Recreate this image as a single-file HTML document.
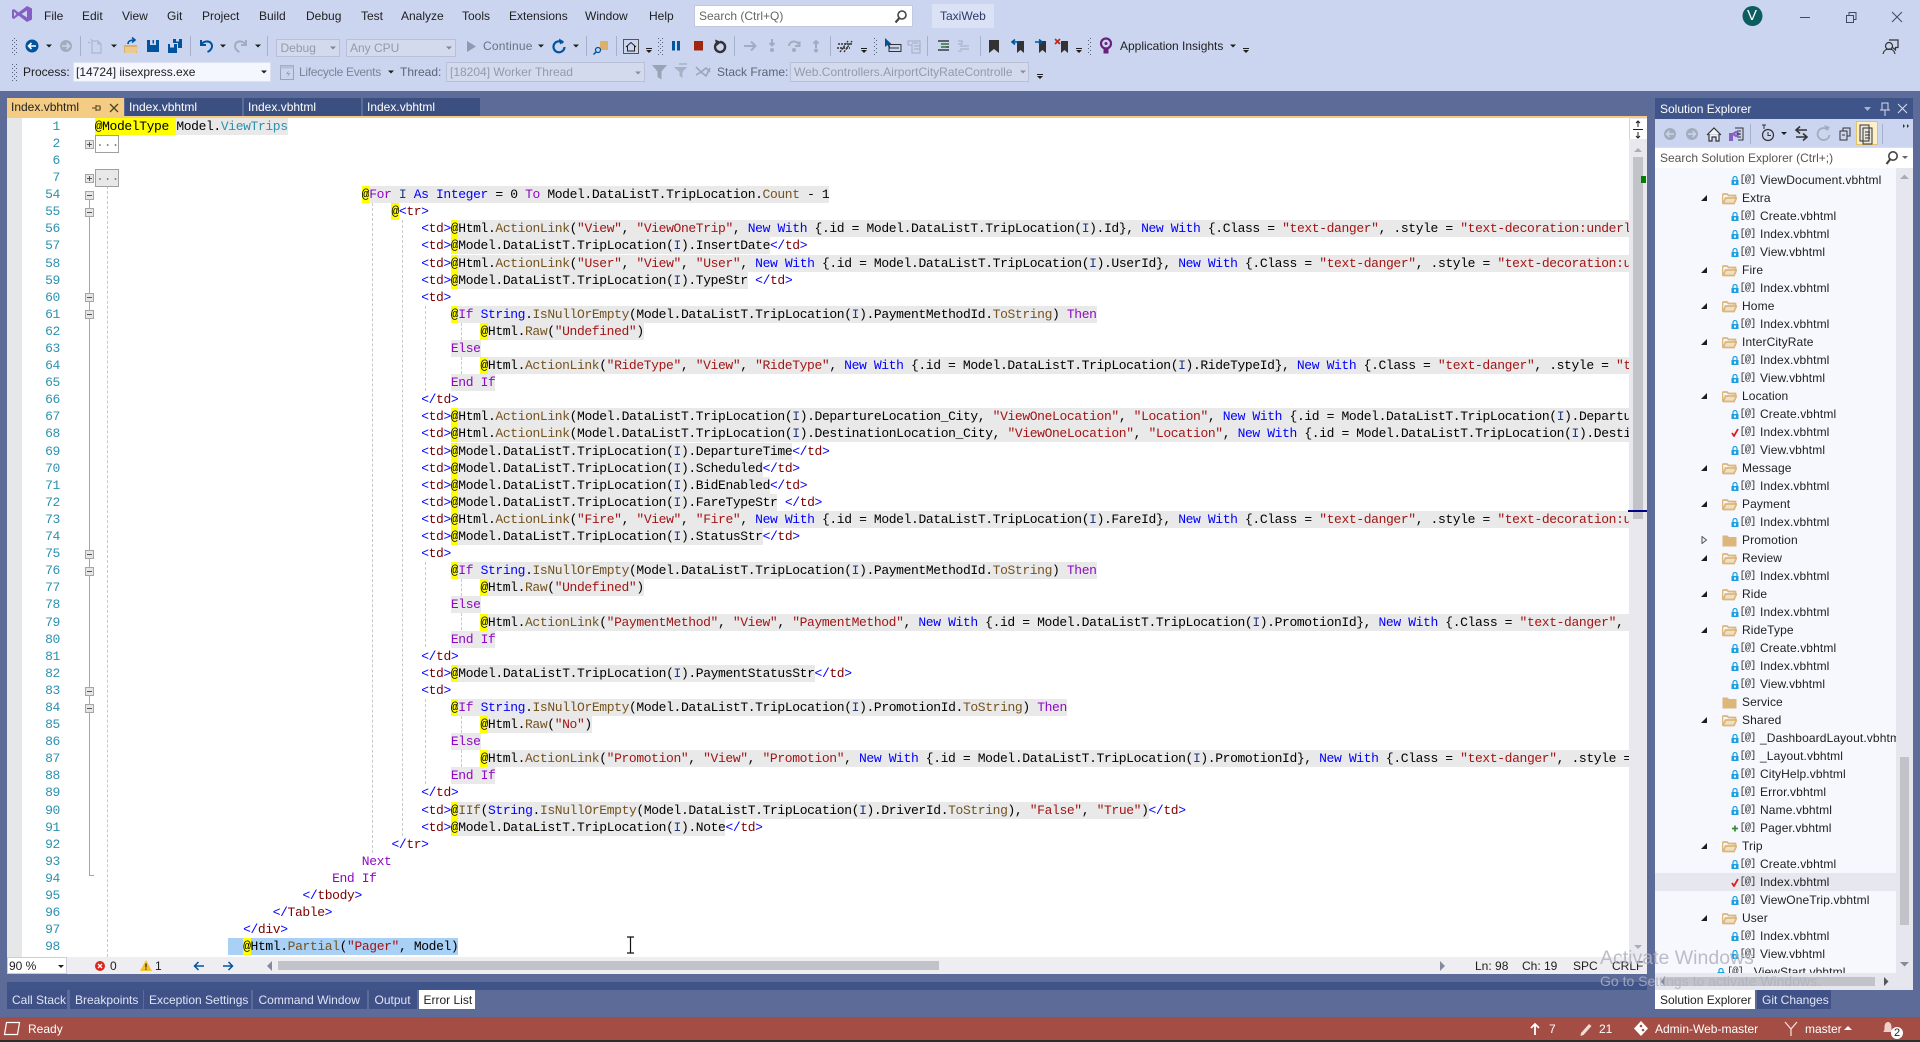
<!DOCTYPE html>
<html><head><meta charset="utf-8"><title>TaxiWeb</title>
<style>
html,body{margin:0;padding:0;width:1920px;height:1042px;overflow:hidden;background:#5D6B99;font-family:"Liberation Sans",sans-serif;font-size:12px;color:#1e1e1e}
.a{position:absolute}
.t{position:absolute;white-space:pre;line-height:16px;height:16px}
#code{position:absolute;left:7px;top:0;width:1622px;height:957px;overflow:hidden}
#lines{position:absolute;left:87.7px;top:117.8px;width:4000px;font:13px/17px "Liberation Mono",monospace;letter-spacing:-.38px;color:#000}
.l{height:17.1px;line-height:17px;white-space:pre}
.l i{font-style:normal}
.u{color:#00f}.t2{color:#800000}.s{color:#a31515}.m{color:#74531f}.k{color:#8f08c4}.v{color:#1f377f}.c{color:#2b91af}
.l b{font-weight:normal;background:#ff0;display:inline-block;height:17px}
.g{background:#e9e9e9;display:inline-block;height:17px}
.i20{margin-left:148.4px}.i24{margin-left:178px}.i28{margin-left:207.8px}.i32{margin-left:237.4px}.i36{margin-left:267.1px}.i40{margin-left:296.8px}.i44{margin-left:326.5px}.i48{margin-left:356.2px}.i52{margin-left:385.8px}
#nums{position:absolute;left:22px;top:117.8px;width:38px;text-align:right;font:13px/17px "Liberation Mono",monospace;letter-spacing:-.36px;color:#2b91af}
#nums div{height:17.1px}
.d{position:absolute;width:0;border-left:1px dashed #c8c8c8}
.fb{position:absolute;left:85px;width:7px;height:7px;border:1px solid #a5a5a5;background:#e6e6e6}
.fb:before{content:"";position:absolute;left:1px;top:3px;width:5px;height:1px;background:#555}
.fb.p:after{content:"";position:absolute;left:3px;top:1px;width:1px;height:5px;background:#555}
.col{position:absolute;left:95px;width:22px;height:16px;border:1px solid #a0a0a0;font:13px/14px "Liberation Mono",monospace;color:#808080;text-align:center;letter-spacing:0}
.tab{position:absolute;top:98px;height:18px;background:#3b4f81;color:#fff;line-height:18px;white-space:pre}
.bt{position:absolute;top:990px;height:19px;background:#3f5187;color:#dfe4f4;line-height:20px;white-space:pre}
.bt.on{background:#f7f8fc;color:#1e1e1e}
.cmb{position:absolute;background:#d3daed;border:1px solid #b8c0d6;box-sizing:border-box;color:#939aad;white-space:pre}
#tree{position:absolute;left:1655px;top:168px;width:241px;height:805px;overflow:hidden;background:#f6f8fe;letter-spacing:.12px;color:#1e1e1e}
.r{position:relative;height:18px;line-height:18px;white-space:pre}
.f{padding-left:105px}
.o{padding-left:87px}
.r svg{position:absolute}
.f svg{left:76px;top:5px;width:8px;height:9px}
.f u{position:absolute;left:84.5px;top:0;text-decoration:none;font:10.5px/18px "Liberation Mono",monospace;letter-spacing:-1px;color:#333}
.o svg.ar{left:45px;top:5px;width:8px;height:8px}
.o svg.fo{left:67px;top:3px;width:15px;height:13px}
</style></head>
<body>
<!-- title / toolbar band -->
<div class="a" style="left:0;top:0;width:1920px;height:91px;background:#ccd5f0"></div>
<div class="a" style="left:932px;top:4px;width:62px;height:24px;background:#dce2f6"></div>
<div class="a" style="left:694px;top:5px;width:219px;height:22px;background:#fff;border:1px solid #c2c9dd;box-sizing:border-box"></div>
<div class="cmb" style="left:275.5px;top:39px;width:64.5px;height:18px;line-height:16px;padding-left:4px">Debug</div>
<div class="cmb" style="left:346px;top:39px;width:110px;height:18px;line-height:16px;padding-left:3px">Any CPU</div>
<div class="a" style="left:72.6px;top:62px;width:198.4px;height:20px;background:#f4f7fe;border:1px solid #dbe1f2;box-sizing:border-box"></div>
<div class="cmb" style="left:446px;top:62px;width:199px;height:20px;line-height:18px;padding-left:3px">[18204] Worker Thread</div>
<div class="cmb" style="left:790px;top:62px;width:239px;height:20px;line-height:18px;padding-left:3px;overflow:hidden">Web.Controllers.AirportCityRateControlle</div>

<svg class="a" style="left:0;top:0" width="1920" height="91" viewBox="0 0 1920 91">
<defs>
<pattern id="gp" width="4" height="4" patternUnits="userSpaceOnUse"><rect width="1" height="1" fill="#59627d"/><rect x="2" y="2" width="1" height="1" fill="#59627d"/></pattern>
<path id="dd" d="M-3-1.5h6l-3 3z" fill="#1e1e1e"/>
<g id="ov"><rect x="-3" y="-3" width="6" height="1" fill="#1e1e1e"/><path d="M-3-1h6l-3 3z" fill="#1e1e1e"/></g>
</defs>
<!-- VS logo -->
<path fill="#865fc5" fill-rule="evenodd" d="M27 6L32 8.5V19.5L27 22L18.5 15.5L14 19L12 18V10L14 9L18.5 12.5ZM27 10.5L21.5 14L27 17.5ZM14 11.5V16.5L16.5 14Z"/>
<!-- grips -->
<rect x="12" y="37" width="5" height="18" fill="url(#gp)"/><rect x="12" y="63" width="5" height="18" fill="url(#gp)"/>
<rect x="658" y="37" width="5" height="18" fill="url(#gp)"/><rect x="873" y="37" width="5" height="18" fill="url(#gp)"/><rect x="1087" y="37" width="5" height="18" fill="url(#gp)"/>
<!-- separators -->
<g fill="#a6b0cb"><rect x="80" y="36" width="1" height="20"/><rect x="190" y="36" width="1" height="20"/><rect x="267" y="36" width="1" height="20"/><rect x="586" y="36" width="1" height="20"/><rect x="616" y="36" width="1" height="20"/><rect x="734" y="36" width="1" height="20"/><rect x="830" y="36" width="1" height="20"/><rect x="927" y="36" width="1" height="20"/><rect x="980" y="36" width="1" height="20"/></g>
<!-- nav -->
<circle cx="32" cy="46" r="6.5" fill="#00539c"/><path d="M36 46H29M31.5 43L28.5 46L31.5 49" stroke="#fff" stroke-width="1.6" fill="none"/>
<use href="#dd" x="49" y="46"/>
<circle cx="66" cy="46" r="6" fill="#a3acbe"/><path d="M62 46H69M66.5 43L69.5 46L66.5 49" stroke="#ccd5f0" stroke-width="1.5" fill="none"/>
<path d="M92 41h6l3 3v9H92zM98 41v3h3" fill="none" stroke="#a8b0c4"/><path d="M91 39l1 2M88 42l2 1" stroke="#a8b0c4"/>
<use href="#dd" x="114" y="46"/>
<path d="M124 45h13v8h-13z" fill="#dcaf6b"/><path d="M125 47h13l-2 6h-11z" fill="#ebc98f"/><path d="M128 44c0-3 3-4 6-4M132 37.5l3 2.5-3 2.5" stroke="#00539c" stroke-width="1.6" fill="none"/>
<path d="M147 40h12v12h-12z" fill="#00539c"/><rect x="150" y="40" width="6" height="5" fill="#ccd5f0"/><rect x="152.5" y="40" width="1.5" height="3.5" fill="#00539c"/>
<path d="M168 44h9v9h-9z" fill="#00539c"/><rect x="170" y="44" width="4" height="3.5" fill="#ccd5f0"/><path d="M173 39h9v9h-4v-5h-5z" fill="#00539c"/><rect x="176" y="39" width="3" height="2.5" fill="#ccd5f0"/>
<path d="M201 40v5h5M201.5 45c1-4 8-5 10-1 1.5 3-.5 6.5-4 8" fill="none" stroke="#00539c" stroke-width="2"/>
<use href="#dd" x="223" y="46"/>
<path d="M246 40v5h-5M245.5 45c-1-4-8-5-10-1-1.5 3 .5 6.5 4 8" fill="none" stroke="#a3acbe" stroke-width="2"/>
<use href="#dd" x="258" y="46"/>
<use href="#dd" x="333" y="48" opacity=".45"/><use href="#dd" x="449" y="48" opacity=".45"/>
<path d="M467 41L476 46.5L467 52z" fill="#8f99b0"/>
<use href="#dd" x="541" y="46"/>
<path d="M563 43a5.5 5.5 0 1 0 1.5 4" fill="none" stroke="#00539c" stroke-width="2.2"/><path d="M559 38.5l5 3-4 3z" fill="#00539c"/>
<use href="#dd" x="576" y="46"/>
<path d="M600 41h8v9h-8z" fill="#dcaf6b"/><circle cx="598" cy="50" r="2.5" fill="#ccd5f0" stroke="#00539c" stroke-width="1.3"/><path d="M596 52l-2.5 2.5" stroke="#00539c" stroke-width="1.5"/>
<rect x="623.5" y="39.5" width="15" height="14" fill="#ccd5f0" stroke="#555" /><path d="M626 47l5-4.5 5 4.5M627.5 46v5h7v-5" fill="none" stroke="#1e1e1e"/>
<use href="#ov" x="649" y="51"/>
<rect x="672" y="41" width="3" height="9.5" fill="#00539c"/><rect x="677" y="41" width="3" height="9.5" fill="#00539c"/>
<rect x="694" y="41" width="9" height="9.5" fill="#a1260d"/>
<path d="M716.5 43.5a5 5 0 1 0 3.5-1.5" fill="none" stroke="#333" stroke-width="2.4"/><path d="M715 39.5l6.5 2.5-5 4z" fill="#333"/>
<path d="M744 46h11M751 41.5l4.5 4.5-4.5 4.5" stroke="#a3acbe" stroke-width="2" fill="none"/>
<path d="M772 39v6M769.5 43l2.5 2.5 2.5-2.5" stroke="#a3acbe" stroke-width="2" fill="none"/><circle cx="772" cy="50" r="2" fill="#a3acbe"/>
<path d="M789 46c0-6 10-6 10 0M799.5 41.5v4.5h-4.5" stroke="#a3acbe" stroke-width="2" fill="none"/><circle cx="794" cy="50" r="2" fill="#a3acbe"/>
<path d="M816 48v-7M813.5 43.5l2.5-2.5 2.5 2.5" stroke="#a3acbe" stroke-width="2" fill="none"/><circle cx="816" cy="50.5" r="2" fill="#a3acbe"/>
<path d="M840 52l8-11M844 52l8-11M838 44h14M837 48h13" stroke="#333" stroke-width="1.4" stroke-dasharray="2 1" fill="none"/>
<use href="#ov" x="864" y="51"/>
<path d="M885 38v9l2.5-2 2 4 1.5-.8-2-3.7h3z" fill="#00539c"/><rect x="889" y="44.5" width="12" height="7" fill="none" stroke="#333"/><rect x="891" y="47.5" width="8" height="1" fill="#333"/>
<path d="M908 41h12v12h-8v-8h-4zM912 43h6M914 46h6M914 49h6" fill="none" stroke="#a3acbe"/>
<path d="M938 41h11M941 44h8M941 47h8M938 50h11" stroke="#1e1e1e" stroke-width="1.2"/><path d="M941 44h8M941 47h5" stroke="#2e7d32" stroke-width="1.2"/>
<path d="M958 41h4v3h-4M960 46h9M960 49h9M958 51h4" stroke="#a3acbe" fill="none"/>
<path d="M989 40h10v13l-5-4-5 4z" fill="#333"/>
<path d="M1017 41h7v12l-3.5-3-3.5 3z" fill="#333"/><path d="M1019 42h-6M1015 39.5l-3 2.5 3 2.5" stroke="#00539c" stroke-width="1.6" fill="none"/>
<path d="M1039 41h7v12l-3.5-3-3.5 3z" fill="#333"/><path d="M1035 42h6M1039 39.5l3 2.5-3 2.5" stroke="#00539c" stroke-width="1.6" fill="none"/>
<path d="M1061 41h7v12l-3.5-3-3.5 3z" fill="#333"/><path d="M1055 39l5 5M1060 39l-5 5" stroke="#c5281c" stroke-width="1.8"/>
<use href="#ov" x="1079" y="51"/>
<circle cx="1106" cy="43.5" r="5" fill="none" stroke="#68217a" stroke-width="2.2"/><rect x="1103.5" y="49" width="5" height="4.5" fill="#68217a"/><circle cx="1106" cy="43.5" r="1.5" fill="#68217a"/>
<use href="#dd" x="1233" y="46"/><use href="#ov" x="1246" y="51"/>
<!-- feedback -->
<circle cx="1889" cy="46" r="3.5" fill="none" stroke="#333" stroke-width="1.2"/><path d="M1883 54c1-4 3-5 6-5s5 1 6 5M1889 40h9v7.5h-2.5v2.5l-3-2.5" fill="none" stroke="#333" stroke-width="1.2"/>
<!-- title controls -->
<circle cx="1752.5" cy="16" r="10" fill="#0b5d5f"/>
<rect x="1800" y="17" width="10" height="1" fill="#3f4a66"/>
<path d="M1846.5 15.5h7v7h-7zM1849 15.5v-3h7v7h-2.5" fill="none" stroke="#3f4a66"/>
<path d="M1892 12l10 10M1902 12l-10 10" stroke="#3f4a66"/>
<!-- search glass -->
<circle cx="902" cy="15" r="4" fill="none" stroke="#444" stroke-width="1.6"/><path d="M899 18.5l-3.5 4" stroke="#444" stroke-width="2.2"/>
<!-- row 2 -->
<use href="#dd" x="264" y="72"/>
<rect x="280.5" y="65.5" width="13" height="14" fill="none" stroke="#9aa2b6"/><rect x="280.5" y="65.5" width="13" height="3" fill="#b7bfd2"/><path d="M289 70l-3 4h2.5l-1.5 3.5 3.5-4.5H288z" fill="#9aa2b6"/>
<use href="#dd" x="391" y="72"/>
<use href="#dd" x="638" y="73" opacity=".4"/>
<path d="M652 65h15l-5.5 6.5v8l-4-2.5v-5.5z" fill="#9aa2b6"/>
<path d="M674 67h13l-4.5 5v6l-3-2v-4z" fill="#a8b0c4"/><path d="M679 64h8" stroke="#a8b0c4" stroke-width="1.5"/>
<path d="M696 67l5 5 5-4 4 4M696 75l5-3 5 4 4-8" fill="none" stroke="#9aa2b6" stroke-width="1.5"/>
<use href="#dd" x="1023" y="72" opacity=".4"/>
<use href="#ov" x="1040" y="77"/>
<!-- tab strip right -->
<path d="M1619 104h7l-3.5 4z" fill="#e9edf8"/>
<circle cx="1641" cy="106" r="3.2" fill="none" stroke="#dfe4f4" stroke-width="2.2"/><circle cx="1641" cy="106" r="5" fill="none" stroke="#dfe4f4" stroke-width="1" stroke-dasharray="2 1.9"/>
</svg>

<!-- menu text -->
<span class="t" style="left:44px;top:8px">File</span><span class="t" style="left:82px;top:8px">Edit</span><span class="t" style="left:122px;top:8px">View</span><span class="t" style="left:167px;top:8px">Git</span><span class="t" style="left:202px;top:8px">Project</span><span class="t" style="left:259px;top:8px">Build</span><span class="t" style="left:306px;top:8px">Debug</span><span class="t" style="left:361px;top:8px">Test</span><span class="t" style="left:401px;top:8px">Analyze</span><span class="t" style="left:462px;top:8px">Tools</span><span class="t" style="left:509px;top:8px">Extensions</span><span class="t" style="left:585px;top:8px">Window</span><span class="t" style="left:649px;top:8px">Help</span>
<span class="t" style="left:699px;top:8px;color:#666">Search (Ctrl+Q)</span>
<span class="t" style="left:940px;top:8px;color:#2b3a66">TaxiWeb</span>
<span class="t" style="left:1747px;top:8px;color:#fff;font-size:15px">V</span>
<span class="t" style="left:483px;top:38px;color:#6a7184;letter-spacing:.2px">Continue</span>
<span class="t" style="left:1120px;top:38px">Application Insights</span>
<span class="t" style="left:23px;top:64px">Process:</span>
<span class="t" style="left:76px;top:64px">[14724] iisexpress.exe</span>
<span class="t" style="left:299px;top:64px;color:#7c8397;letter-spacing:-.3px">Lifecycle Events</span>
<span class="t" style="left:400px;top:64px;color:#5c6478">Thread:</span>
<span class="t" style="left:717px;top:64px;color:#5c6478">Stack Frame:</span>

<!-- tabs -->
<div class="tab" style="left:7px;width:117px;background:#f5cc84;color:#1e1e1e;padding-left:4px;box-sizing:border-box">Index.vbhtml</div>
<svg class="a" style="left:90px;top:100px" width="32" height="16"><path d="M2 8h4M6 5v6M6 6h4v4H6M10 8h1" stroke="#4d4222" fill="none"/><path d="M20 4l8 8M28 4l-8 8" stroke="#4d4222" stroke-width="1.3"/></svg>
<div class="tab" style="left:124.5px;width:117.5px;padding-left:4.5px;box-sizing:border-box">Index.vbhtml</div>
<div class="tab" style="left:243.5px;width:117.5px;padding-left:4.5px;box-sizing:border-box">Index.vbhtml</div>
<div class="tab" style="left:362.5px;width:117.5px;padding-left:4.5px;box-sizing:border-box">Index.vbhtml</div>
<div class="a" style="left:7px;top:116px;width:1640px;height:2px;background:#f5cc84"></div>

<!-- editor -->
<div class="a" style="left:7px;top:118px;width:1622px;height:839px;background:#fff"></div>
<div class="a" style="left:7px;top:118px;width:15px;height:839px;background:#e6e7e8"></div>
<div class="a" style="left:89px;top:192px;width:1px;height:684px;background:#a5a5a5"></div>
<div class="a" style="left:89px;top:875px;width:5px;height:1px;background:#a5a5a5"></div>
<div class="d" style="left:106.5px;top:186px;height:771px"></div>
<div class="d" style="left:372px;top:203px;height:650px"></div>
<div class="d" style="left:402px;top:220px;height:616px"></div>
<div class="d" style="left:424.5px;top:306px;height:85px"></div>
<div class="d" style="left:424.5px;top:562px;height:85px"></div>
<div class="d" style="left:424.5px;top:699px;height:85px"></div>
<div class="d" style="left:461px;top:323px;height:17px"></div><div class="d" style="left:461px;top:357px;height:17px"></div>
<div class="d" style="left:461px;top:579px;height:17px"></div><div class="d" style="left:461px;top:613px;height:17px"></div>
<div class="d" style="left:461px;top:716px;height:17px"></div><div class="d" style="left:461px;top:750px;height:17px"></div>

<div class="fb p" style="top:140px"></div><div class="fb p" style="top:174px"></div>
<div class="fb" style="top:191px"></div><div class="fb" style="top:208px"></div><div class="fb" style="top:293px"></div><div class="fb" style="top:310px"></div><div class="fb" style="top:550px"></div><div class="fb" style="top:567px"></div><div class="fb" style="top:687px"></div><div class="fb" style="top:704px"></div>
<div class="col" style="top:135px">...</div>
<div class="col" style="top:169px;background:#e8e8e8">...</div>

<div id="nums"><div>1</div><div>2</div><div>6</div><div>7</div><div>54</div><div>55</div><div>56</div><div>57</div><div>58</div><div>59</div><div>60</div><div>61</div><div>62</div><div>63</div><div>64</div><div>65</div><div>66</div><div>67</div><div>68</div><div>69</div><div>70</div><div>71</div><div>72</div><div>73</div><div>74</div><div>75</div><div>76</div><div>77</div><div>78</div><div>79</div><div>80</div><div>81</div><div>82</div><div>83</div><div>84</div><div>85</div><div>86</div><div>87</div><div>88</div><div>89</div><div>90</div><div>91</div><div>92</div><div>93</div><div>94</div><div>95</div><div>96</div><div>97</div><div>98</div></div>

<div id="code"><div id="lines">
<div class="l"><b>@ModelType </b><span class="g">Model.<i class="c">ViewTrips</i></span></div>
<div class="l"></div>
<div class="l"></div>
<div class="l"></div>
<div class="l i36"><b>@</b><span class="g"><i class="k">For</i> <i class="v">I</i> <i class="u">As</i> <i class="u">Integer</i> = 0 <i class="k">To</i> Model.DataListT.TripLocation.<i class="m">Count</i> - 1</span></div>
<div class="l i40"><b>@</b><i class="u">&lt;</i><i class="t2">tr</i><i class="u">&gt;</i></div>
<div class="l i44"><i class="u">&lt;</i><i class="t2">td</i><i class="u">&gt;</i><b>@</b><span class="g">Html.<i class="m">ActionLink</i>(<i class="s">"View"</i>, <i class="s">"ViewOneTrip"</i>, <i class="u">New</i> <i class="u">With</i> {.id = Model.DataListT.TripLocation(<i class="v">I</i>).Id}, <i class="u">New</i> <i class="u">With</i> {.Class = <i class="s">"text-danger"</i>, .style = <i class="s">"text-decoration:underline"</i>})</span></div>
<div class="l i44"><i class="u">&lt;</i><i class="t2">td</i><i class="u">&gt;</i><b>@</b><span class="g">Model.DataListT.TripLocation(<i class="v">I</i>).InsertDate</span><i class="u">&lt;/</i><i class="t2">td</i><i class="u">&gt;</i></div>
<div class="l i44"><i class="u">&lt;</i><i class="t2">td</i><i class="u">&gt;</i><b>@</b><span class="g">Html.<i class="m">ActionLink</i>(<i class="s">"User"</i>, <i class="s">"View"</i>, <i class="s">"User"</i>, <i class="u">New</i> <i class="u">With</i> {.id = Model.DataListT.TripLocation(<i class="v">I</i>).UserId}, <i class="u">New</i> <i class="u">With</i> {.Class = <i class="s">"text-danger"</i>, .style = <i class="s">"text-decoration:underline"</i>})</span></div>
<div class="l i44"><i class="u">&lt;</i><i class="t2">td</i><i class="u">&gt;</i><b>@</b><span class="g">Model.DataListT.TripLocation(<i class="v">I</i>).TypeStr</span> <i class="u">&lt;/</i><i class="t2">td</i><i class="u">&gt;</i></div>
<div class="l i44"><i class="u">&lt;</i><i class="t2">td</i><i class="u">&gt;</i></div>
<div class="l i48"><b>@</b><span class="g"><i class="k">If</i> <i class="u">String</i>.<i class="m">IsNullOrEmpty</i>(Model.DataListT.TripLocation(<i class="v">I</i>).PaymentMethodId.<i class="m">ToString</i>) <i class="k">Then</i></span></div>
<div class="l i52"><b>@</b><span class="g">Html.<i class="m">Raw</i>(<i class="s">"Undefined"</i>)</span></div>
<div class="l i48"><span class="g"><i class="k">Else</i></span></div>
<div class="l i52"><b>@</b><span class="g">Html.<i class="m">ActionLink</i>(<i class="s">"RideType"</i>, <i class="s">"View"</i>, <i class="s">"RideType"</i>, <i class="u">New</i> <i class="u">With</i> {.id = Model.DataListT.TripLocation(<i class="v">I</i>).RideTypeId}, <i class="u">New</i> <i class="u">With</i> {.Class = <i class="s">"text-danger"</i>, .style = <i class="s">"text-decoration:underline"</i>})</span></div>
<div class="l i48"><span class="g"><i class="k">End</i> <i class="k">If</i></span></div>
<div class="l i44"><i class="u">&lt;/</i><i class="t2">td</i><i class="u">&gt;</i></div>
<div class="l i44"><i class="u">&lt;</i><i class="t2">td</i><i class="u">&gt;</i><b>@</b><span class="g">Html.<i class="m">ActionLink</i>(Model.DataListT.TripLocation(<i class="v">I</i>).DepartureLocation_City, <i class="s">"ViewOneLocation"</i>, <i class="s">"Location"</i>, <i class="u">New</i> <i class="u">With</i> {.id = Model.DataListT.TripLocation(<i class="v">I</i>).DepartureLocationId})</span></div>
<div class="l i44"><i class="u">&lt;</i><i class="t2">td</i><i class="u">&gt;</i><b>@</b><span class="g">Html.<i class="m">ActionLink</i>(Model.DataListT.TripLocation(<i class="v">I</i>).DestinationLocation_City, <i class="s">"ViewOneLocation"</i>, <i class="s">"Location"</i>, <i class="u">New</i> <i class="u">With</i> {.id = Model.DataListT.TripLocation(<i class="v">I</i>).DestinationLocationId})</span></div>
<div class="l i44"><i class="u">&lt;</i><i class="t2">td</i><i class="u">&gt;</i><b>@</b><span class="g">Model.DataListT.TripLocation(<i class="v">I</i>).DepartureTime</span><i class="u">&lt;/</i><i class="t2">td</i><i class="u">&gt;</i></div>
<div class="l i44"><i class="u">&lt;</i><i class="t2">td</i><i class="u">&gt;</i><b>@</b><span class="g">Model.DataListT.TripLocation(<i class="v">I</i>).Scheduled</span><i class="u">&lt;/</i><i class="t2">td</i><i class="u">&gt;</i></div>
<div class="l i44"><i class="u">&lt;</i><i class="t2">td</i><i class="u">&gt;</i><b>@</b><span class="g">Model.DataListT.TripLocation(<i class="v">I</i>).BidEnabled</span><i class="u">&lt;/</i><i class="t2">td</i><i class="u">&gt;</i></div>
<div class="l i44"><i class="u">&lt;</i><i class="t2">td</i><i class="u">&gt;</i><b>@</b><span class="g">Model.DataListT.TripLocation(<i class="v">I</i>).FareTypeStr</span> <i class="u">&lt;/</i><i class="t2">td</i><i class="u">&gt;</i></div>
<div class="l i44"><i class="u">&lt;</i><i class="t2">td</i><i class="u">&gt;</i><b>@</b><span class="g">Html.<i class="m">ActionLink</i>(<i class="s">"Fire"</i>, <i class="s">"View"</i>, <i class="s">"Fire"</i>, <i class="u">New</i> <i class="u">With</i> {.id = Model.DataListT.TripLocation(<i class="v">I</i>).FareId}, <i class="u">New</i> <i class="u">With</i> {.Class = <i class="s">"text-danger"</i>, .style = <i class="s">"text-decoration:underline"</i>})</span></div>
<div class="l i44"><i class="u">&lt;</i><i class="t2">td</i><i class="u">&gt;</i><b>@</b><span class="g">Model.DataListT.TripLocation(<i class="v">I</i>).StatusStr</span><i class="u">&lt;/</i><i class="t2">td</i><i class="u">&gt;</i></div>
<div class="l i44"><i class="u">&lt;</i><i class="t2">td</i><i class="u">&gt;</i></div>
<div class="l i48"><b>@</b><span class="g"><i class="k">If</i> <i class="u">String</i>.<i class="m">IsNullOrEmpty</i>(Model.DataListT.TripLocation(<i class="v">I</i>).PaymentMethodId.<i class="m">ToString</i>) <i class="k">Then</i></span></div>
<div class="l i52"><b>@</b><span class="g">Html.<i class="m">Raw</i>(<i class="s">"Undefined"</i>)</span></div>
<div class="l i48"><span class="g"><i class="k">Else</i></span></div>
<div class="l i52"><b>@</b><span class="g">Html.<i class="m">ActionLink</i>(<i class="s">"PaymentMethod"</i>, <i class="s">"View"</i>, <i class="s">"PaymentMethod"</i>, <i class="u">New</i> <i class="u">With</i> {.id = Model.DataListT.TripLocation(<i class="v">I</i>).PromotionId}, <i class="u">New</i> <i class="u">With</i> {.Class = <i class="s">"text-danger"</i>, .style = <i class="s">"text-decoration:underline"</i>})</span></div>
<div class="l i48"><span class="g"><i class="k">End</i> <i class="k">If</i></span></div>
<div class="l i44"><i class="u">&lt;/</i><i class="t2">td</i><i class="u">&gt;</i></div>
<div class="l i44"><i class="u">&lt;</i><i class="t2">td</i><i class="u">&gt;</i><b>@</b><span class="g">Model.DataListT.TripLocation(<i class="v">I</i>).PaymentStatusStr</span><i class="u">&lt;/</i><i class="t2">td</i><i class="u">&gt;</i></div>
<div class="l i44"><i class="u">&lt;</i><i class="t2">td</i><i class="u">&gt;</i></div>
<div class="l i48"><b>@</b><span class="g"><i class="k">If</i> <i class="u">String</i>.<i class="m">IsNullOrEmpty</i>(Model.DataListT.TripLocation(<i class="v">I</i>).PromotionId.<i class="m">ToString</i>) <i class="k">Then</i></span></div>
<div class="l i52"><b>@</b><span class="g">Html.<i class="m">Raw</i>(<i class="s">"No"</i>)</span></div>
<div class="l i48"><span class="g"><i class="k">Else</i></span></div>
<div class="l i52"><b>@</b><span class="g">Html.<i class="m">ActionLink</i>(<i class="s">"Promotion"</i>, <i class="s">"View"</i>, <i class="s">"Promotion"</i>, <i class="u">New</i> <i class="u">With</i> {.id = Model.DataListT.TripLocation(<i class="v">I</i>).PromotionId}, <i class="u">New</i> <i class="u">With</i> {.Class = <i class="s">"text-danger"</i>, .style = <i class="s">"text-decoration:underline"</i>})</span></div>
<div class="l i48"><span class="g"><i class="k">End</i> <i class="k">If</i></span></div>
<div class="l i44"><i class="u">&lt;/</i><i class="t2">td</i><i class="u">&gt;</i></div>
<div class="l i44"><i class="u">&lt;</i><i class="t2">td</i><i class="u">&gt;</i><b>@</b><span class="g"><i class="m">IIf</i>(<i class="u">String</i>.<i class="m">IsNullOrEmpty</i>(Model.DataListT.TripLocation(<i class="v">I</i>).DriverId.<i class="m">ToString</i>), <i class="s">"False"</i>, <i class="s">"True"</i>)</span><i class="u">&lt;/</i><i class="t2">td</i><i class="u">&gt;</i></div>
<div class="l i44"><i class="u">&lt;</i><i class="t2">td</i><i class="u">&gt;</i><b>@</b><span class="g">Model.DataListT.TripLocation(<i class="v">I</i>).Note</span><i class="u">&lt;/</i><i class="t2">td</i><i class="u">&gt;</i></div>
<div class="l i40"><i class="u">&lt;/</i><i class="t2">tr</i><i class="u">&gt;</i></div>
<div class="l i36"><i class="k">Next</i></div>
<div class="l i32"><i class="k">End</i> <i class="k">If</i></div>
<div class="l i28"><i class="u">&lt;/</i><i class="t2">tbody</i><i class="u">&gt;</i></div>
<div class="l i24"><i class="u">&lt;/</i><i class="t2">Table</i><i class="u">&gt;</i></div>
<div class="l i20"><i class="u">&lt;/</i><i class="t2">div</i><i class="u">&gt;</i></div>
<div class="l" style="margin-left:133.6px"><span style="display:inline-block;height:17px;background:#a9d0f5">  <b>@</b>Html.<i class="m">Partial</i>(<i class="s">"Pager"</i>, Model)</span></div>
</div></div>

<!-- I-beam -->
<svg class="a" style="left:626px;top:936px" width="9" height="18"><path d="M1 1h7M4.5 1v16M1 17h7" stroke="#111" stroke-width="1.2" fill="none"/></svg>

<!-- vertical scrollbar -->
<div class="a" style="left:1629px;top:118px;width:18px;height:839px;background:#e8e8ee"></div>
<div class="a" style="left:1629px;top:119px;width:18px;height:20px;background:#fff;border-left:1px solid #cfd3e0;box-sizing:border-box"></div>
<svg class="a" style="left:1629px;top:119px" width="18" height="40"><path d="M4 10.5h10M9 2v6M7 4l2-2 2 2M9 13v6M7 17l2 2 2-2" stroke="#1e1e1e" fill="none"/><path d="M5 33l4-4 4 4z" fill="#a9adb8"/></svg>
<div class="a" style="left:1633px;top:157px;width:10px;height:362px;background:#c2c3c9"></div>
<div class="a" style="left:1641px;top:176px;width:5px;height:7px;background:#008000"></div>
<div class="a" style="left:1628px;top:510px;width:19px;height:2px;background:#00008b"></div>
<svg class="a" style="left:1629px;top:942px" width="18" height="12"><path d="M5 3h8l-4 4z" fill="#a9adb8"/></svg>

<!-- editor bottom bar -->
<div class="a" style="left:7px;top:957px;width:1640px;height:17px;background:#eeeef2"></div>
<div class="a" style="left:7px;top:957px;width:60px;height:17px;background:#fff;border:1px solid #ccd;box-sizing:border-box"></div>
<span class="t" style="left:9px;top:958px">90 %</span>
<svg class="a" style="left:0;top:955px" width="290" height="20">
<path d="M58 10h6l-3 3z" fill="#1e1e1e"/>
<circle cx="100" cy="11" r="5" fill="#d9261c"/><path d="M98 9l4 4M102 9l-4 4" stroke="#fff" stroke-width="1.3"/>
<path d="M146 5l6 11h-12z" fill="#f4c32c"/><path d="M146 8.5v4M146 13.5v1.3" stroke="#1e1e1e" stroke-width="1.2"/>
<path d="M204 11h-9M198.5 7l-4 4 4 4" fill="none" stroke="#00539c" stroke-width="1.5"/>
<path d="M223 11h9M228.5 7l4 4-4 4" fill="none" stroke="#00539c" stroke-width="1.5"/>
<path d="M272 6v10l-5-5z" fill="#868999"/>
</svg>
<span class="t" style="left:110px;top:958px">0</span><span class="t" style="left:155px;top:958px">1</span>
<div class="a" style="left:278px;top:961px;width:661px;height:9px;background:#c2c3c9"></div>
<svg class="a" style="left:1438px;top:960px" width="10" height="12"><path d="M2 1v10l5-5z" fill="#868999"/></svg>
<span class="t" style="left:1475px;top:958px">Ln: 98</span><span class="t" style="left:1522px;top:958px">Ch: 19</span><span class="t" style="left:1573px;top:958px">SPC</span><span class="t" style="left:1612px;top:958px">CRLF</span>

<!-- error-list strip -->
<div class="a" style="left:7px;top:982px;width:1640px;height:8px;background:#3f5489;overflow:hidden"><span class="t" style="left:5px;top:5px;color:#fff">Error List</span></div>

<!-- bottom tabs -->
<div class="bt" style="left:7px;width:60px;padding-left:5px;box-sizing:border-box">Call Stack</div>
<div class="bt" style="left:69.5px;width:73px;padding-left:5.5px;box-sizing:border-box">Breakpoints</div>
<div class="bt" style="left:144px;width:107px;padding-left:5px;box-sizing:border-box">Exception Settings</div>
<div class="bt" style="left:253px;width:114px;padding-left:5.5px;box-sizing:border-box">Command Window</div>
<div class="bt" style="left:369px;width:48px;padding-left:5.5px;box-sizing:border-box">Output</div>
<div class="bt on" style="left:419px;width:56px;padding-left:4.5px;box-sizing:border-box;background:#fff">Error List</div>

<!-- solution explorer -->
<div class="a" style="left:1655px;top:98px;width:258px;height:21px;background:#3f5489"></div>
<span class="t" style="left:1660px;top:101px;color:#fff">Solution Explorer</span>
<svg class="a" style="left:1860px;top:100px" width="52" height="18"><path d="M4 7h7l-3.5 4z" fill="#a9b4d2"/><path d="M22 3h6v7h-6zM25 10v6M20 10h10" fill="none" stroke="#d5dbec"/><path d="M38 4l9 9M47 4l-9 9" stroke="#d5dbec" stroke-width="1.1"/></svg>
<div class="a" style="left:1655px;top:119px;width:258px;height:28px;background:#ccd5f0"></div>
<div class="a" style="left:1856px;top:121px;width:22px;height:24px;background:#fdefc8;border:1px solid #e5c365;box-sizing:border-box"></div>
<svg class="a" style="left:1655px;top:119px" width="258" height="28">
<circle cx="15" cy="15" r="6" fill="#a3acbe"/><path d="M19 15h-7M14.5 12l-3 3 3 3" stroke="#ccd5f0" stroke-width="1.4" fill="none"/>
<circle cx="37" cy="15" r="6" fill="#a3acbe"/><path d="M33 15h7M37.5 12l3 3-3 3" stroke="#ccd5f0" stroke-width="1.4" fill="none"/>
<path d="M52 16l7-7 7 7M54 15v7h3v-4h4v4h3v-7" fill="#f1f1f1" stroke="#333" stroke-width="1.2"/>
<path d="M78 15l3-2 3 2-3 2-3-2" fill="none" stroke="#865fc5" stroke-width="2"/><rect x="74" y="14" width="4" height="8" fill="#865fc5"/><path d="M80 9h8v12h-5M82 12h4M82 15h4M82 18h4" fill="none" stroke="#333"/>
<rect x="95" y="5" width="1" height="20" fill="#a6b0cb"/>
<circle cx="113" cy="16" r="5.5" fill="none" stroke="#333" stroke-width="1.2"/><path d="M113 13v3.5h3M107 6h4M109 6v4" stroke="#333" fill="none"/>
<path d="M126 13h6l-3 3z" fill="#1e1e1e"/>
<path d="M141 11h11M145 7.5l-4 3.5 4 3.5M152 18h-11M148 14.5l4 3.5-4 3.5" fill="none" stroke="#333" stroke-width="1.6"/>
<path d="M173 11a6 6 0 1 0 1.5 5" fill="none" stroke="#a3acbe" stroke-width="1.8"/><path d="M169 6l6 2-3 4z" fill="#a3acbe"/>
<path d="M185 12h7v9h-7zM188 12V9h7v8h-3" fill="none" stroke="#333"/><path d="M187 16h3" stroke="#333"/>
<path d="M205 6h9v16h-9zM208 9h9v16h-9z" fill="#e9e6df" stroke="#333"/><path d="M210 13h5M210 16h5M210 19h5" stroke="#333"/>
<rect x="227" y="5" width="1" height="20" fill="#a6b0cb"/>
<path d="M248 5l2 2-2 2zM252 5l2 2-2 2z" fill="#333"/>
</svg>
<div class="a" style="left:1655px;top:147px;width:258px;height:21px;background:#fff;border-top:1px solid #d8dded;box-sizing:border-box"></div>
<span class="t" style="left:1660px;top:150px;color:#555">Search Solution Explorer (Ctrl+;)</span>
<svg class="a" style="left:1884px;top:149px" width="28" height="18"><circle cx="9" cy="7" r="4.2" fill="none" stroke="#444" stroke-width="1.6"/><path d="M6 10.5l-3.5 4.5" stroke="#444" stroke-width="2.2"/><path d="M18 7h6l-3 3z" fill="#666"/></svg>

<svg width="0" height="0" style="position:absolute"><defs>
<g id="L"><path d="M2 4V2.5a2 2 0 0 1 4 0V4" fill="none" stroke="#1ba1e2" stroke-width="1.2"/><rect x="0.5" y="4" width="7" height="5" fill="#1ba1e2"/><rect x="3" y="5.5" width="2" height="2" fill="#fff"/></g>
<path id="K" d="M1 5l2 3 4-7" fill="none" stroke="#d92121" stroke-width="1.8"/>
<path id="P" d="M4 1.5v6M1 4.500h6" stroke="#388a34" stroke-width="1.7"/>
<path id="A" d="M7 1V7H1Z" fill="#1e1e1e"/>
<path id="B" d="M2 .5L6.5 4 2 7.5z" fill="none" stroke="#555"/>
<g id="O"><path d="M.5 2h4.500l1.500 1.500h7v2.500M.5 2v9h1l2-5h11l-2.500 5.500H1" fill="#efe0c4" stroke="#dcb67a" stroke-width="1.7"/></g>
<path id="C" d="M.5 1.500h5l1.500 1.500h7.500v9.500H.5z" fill="#dcb67a"/>
</defs></svg>

<div id="tree"><div style="height:3px"></div>
<div class="r f"><svg><use href="#L"/></svg><u>[@]</u>ViewDocument.vbhtml</div>
<div class="r o"><svg class="ar"><use href="#A"/></svg><svg class="fo"><use href="#O"/></svg>Extra</div>
<div class="r f"><svg><use href="#L"/></svg><u>[@]</u>Create.vbhtml</div>
<div class="r f"><svg><use href="#L"/></svg><u>[@]</u>Index.vbhtml</div>
<div class="r f"><svg><use href="#L"/></svg><u>[@]</u>View.vbhtml</div>
<div class="r o"><svg class="ar"><use href="#A"/></svg><svg class="fo"><use href="#O"/></svg>Fire</div>
<div class="r f"><svg><use href="#L"/></svg><u>[@]</u>Index.vbhtml</div>
<div class="r o"><svg class="ar"><use href="#A"/></svg><svg class="fo"><use href="#O"/></svg>Home</div>
<div class="r f"><svg><use href="#L"/></svg><u>[@]</u>Index.vbhtml</div>
<div class="r o"><svg class="ar"><use href="#A"/></svg><svg class="fo"><use href="#O"/></svg>InterCityRate</div>
<div class="r f"><svg><use href="#L"/></svg><u>[@]</u>Index.vbhtml</div>
<div class="r f"><svg><use href="#L"/></svg><u>[@]</u>View.vbhtml</div>
<div class="r o"><svg class="ar"><use href="#A"/></svg><svg class="fo"><use href="#O"/></svg>Location</div>
<div class="r f"><svg><use href="#L"/></svg><u>[@]</u>Create.vbhtml</div>
<div class="r f"><svg><use href="#K"/></svg><u>[@]</u>Index.vbhtml</div>
<div class="r f"><svg><use href="#L"/></svg><u>[@]</u>View.vbhtml</div>
<div class="r o"><svg class="ar"><use href="#A"/></svg><svg class="fo"><use href="#O"/></svg>Message</div>
<div class="r f"><svg><use href="#L"/></svg><u>[@]</u>Index.vbhtml</div>
<div class="r o"><svg class="ar"><use href="#A"/></svg><svg class="fo"><use href="#O"/></svg>Payment</div>
<div class="r f"><svg><use href="#L"/></svg><u>[@]</u>Index.vbhtml</div>
<div class="r o"><svg class="ar"><use href="#B"/></svg><svg class="fo"><use href="#C"/></svg>Promotion</div>
<div class="r o"><svg class="ar"><use href="#A"/></svg><svg class="fo"><use href="#O"/></svg>Review</div>
<div class="r f"><svg><use href="#L"/></svg><u>[@]</u>Index.vbhtml</div>
<div class="r o"><svg class="ar"><use href="#A"/></svg><svg class="fo"><use href="#O"/></svg>Ride</div>
<div class="r f"><svg><use href="#L"/></svg><u>[@]</u>Index.vbhtml</div>
<div class="r o"><svg class="ar"><use href="#A"/></svg><svg class="fo"><use href="#O"/></svg>RideType</div>
<div class="r f"><svg><use href="#L"/></svg><u>[@]</u>Create.vbhtml</div>
<div class="r f"><svg><use href="#L"/></svg><u>[@]</u>Index.vbhtml</div>
<div class="r f"><svg><use href="#L"/></svg><u>[@]</u>View.vbhtml</div>
<div class="r o"><svg class="fo"><use href="#C"/></svg>Service</div>
<div class="r o"><svg class="ar"><use href="#A"/></svg><svg class="fo"><use href="#O"/></svg>Shared</div>
<div class="r f"><svg><use href="#L"/></svg><u>[@]</u>_DashboardLayout.vbhtml</div>
<div class="r f"><svg><use href="#L"/></svg><u>[@]</u>_Layout.vbhtml</div>
<div class="r f"><svg><use href="#L"/></svg><u>[@]</u>CityHelp.vbhtml</div>
<div class="r f"><svg><use href="#L"/></svg><u>[@]</u>Error.vbhtml</div>
<div class="r f"><svg><use href="#L"/></svg><u>[@]</u>Name.vbhtml</div>
<div class="r f"><svg><use href="#P"/></svg><u>[@]</u>Pager.vbhtml</div>
<div class="r o"><svg class="ar"><use href="#A"/></svg><svg class="fo"><use href="#O"/></svg>Trip</div>
<div class="r f"><svg><use href="#L"/></svg><u>[@]</u>Create.vbhtml</div>
<div class="r f" style="background:#e6e7ef"><svg><use href="#K"/></svg><u>[@]</u>Index.vbhtml</div>
<div class="r f"><svg><use href="#L"/></svg><u>[@]</u>ViewOneTrip.vbhtml</div>
<div class="r o"><svg class="ar"><use href="#A"/></svg><svg class="fo"><use href="#O"/></svg>User</div>
<div class="r f"><svg><use href="#L"/></svg><u>[@]</u>Index.vbhtml</div>
<div class="r f"><svg><use href="#L"/></svg><u>[@]</u>View.vbhtml</div>
<div class="r" style="padding-left:92px"><svg style="left:62px;top:5px;width:8px;height:9px"><use href="#L"/></svg><u style="position:absolute;left:72px;top:0;text-decoration:none;font:10.5px/18px 'Liberation Mono',monospace;letter-spacing:-1px;color:#333">[@]</u>_ViewStart.vbhtml</div>
</div>
<!-- tree scrollbars -->
<div class="a" style="left:1896px;top:168px;width:17px;height:805px;background:#e6e7ee"></div>
<svg class="a" style="left:1896px;top:170px" width="17" height="14"><path d="M4 9l4.5-4.5L13 9z" fill="#a9adb8"/></svg>
<div class="a" style="left:1900px;top:757px;width:9px;height:168px;background:#c2c3c9"></div>
<svg class="a" style="left:1896px;top:958px" width="17" height="14"><path d="M4 4h9l-4.500 4.500z" fill="#868999"/></svg>
<div class="a" style="left:1655px;top:973px;width:258px;height:17px;background:#e6e7ee"></div>
<div class="a" style="left:1663px;top:977px;width:212px;height:9px;background:#c2c3c9"></div>
<svg class="a" style="left:1656px;top:975px" width="240" height="13"><path d="M9 2v9l-4.500-4.500z" fill="#868999"/><path d="M228 2v9l4.500-4.500z" fill="#555"/></svg>
<div class="bt on" style="left:1655px;width:100px;padding-left:5px;box-sizing:border-box;background:#fff">Solution Explorer</div>
<div class="bt" style="left:1757px;width:74px;padding-left:5px;box-sizing:border-box">Git Changes</div>

<!-- watermark -->
<span class="t" style="left:1600px;top:947px;font-size:19.5px;line-height:22px;height:22px;color:rgba(175,178,190,.85)">Activate Windows</span>
<span class="t" style="left:1600px;top:973px;font-size:14px;color:rgba(175,178,190,.85)">Go to Settings to activate Windows.</span>

<!-- status bar -->
<div class="a" style="left:0;top:1017px;width:1920px;height:23px;background:#a34d44"></div>
<div class="a" style="left:0;top:1040px;width:1920px;height:2px;background:#24302f"></div>
<svg class="a" style="left:0;top:1017px" width="1920" height="23">
<path d="M6.5 5.5h13l-2 12h-13z" fill="none" stroke="#fff" stroke-width="1.2"/>
<path d="M1535 18V7M1531 11l4-4 4 4" stroke="#fff" stroke-width="1.8" fill="none"/>
<path d="M1581 16l8-9 2.5 2-8 9-3 1z" fill="#f2dcd9"/>
<path d="M1641 4l7 7.5-7 7.5-7-7.5z" fill="#fff"/><circle cx="1641" cy="9" r="1.3" fill="#a34d44"/><circle cx="1643" cy="13" r="1.3" fill="#a34d44"/>
<path d="M1785 5l6 7 6-7M1791 12v7" fill="none" stroke="#f2dcd9" stroke-width="1.3"/>
<path d="M1844 13l4-4 4 4z" fill="#fff"/>
<path d="M1883 15c1.5-1 1.5-3 1.5-5 0-3 1.5-5 3.5-5s3.5 2 3.5 5c0 2 0 4 1.5 5z" fill="#f0d0cb"/>
<circle cx="1897" cy="16" r="6" fill="#fff"/>
</svg>
<span class="t" style="left:28px;top:1021px;color:#fff">Ready</span>
<span class="t" style="left:1549px;top:1021px;color:#fff">7</span>
<span class="t" style="left:1599px;top:1021px;color:#fff">21</span>
<span class="t" style="left:1655px;top:1021px;color:#fff">Admin-Web-master</span>
<span class="t" style="left:1805px;top:1021px;color:#fff">master</span>
<span class="t" style="left:1894px;top:1025px;color:#1e1e1e;font-size:11px">2</span>
</body></html>
